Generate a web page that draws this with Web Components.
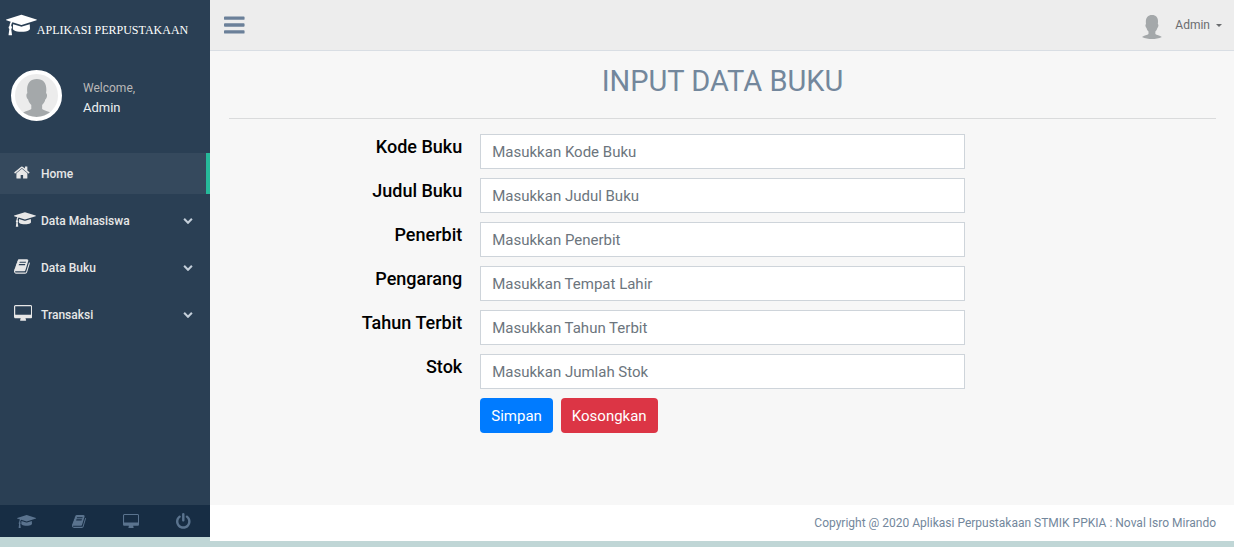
<!DOCTYPE html>
<html lang="id">
<head>
<meta charset="utf-8">
<meta name="viewport" content="width=device-width, initial-scale=1">
<title>Aplikasi Perpustakaan</title>
<style>
  body { margin: 0; background: #c0d6d6; font: 13px/20px Roboto, "Liberation Sans", sans-serif; color: #73879c; }
</style>
</head>
<body>
<library-app></library-app>
<script>
const ICONS = {
  cap: ['0 0 2304 1792', 'M1774 836l18 316q4 69-82 128t-235 93.5-323 34.5-323-34.5-235-93.5-82-128l18-316 574 181q22 7 48 7t48-7zm530-324q0 23-22 31l-1120 352q-4 1-10 1t-10-1l-652-206q-43 34-71 111.5t-34 178.5q63 36 63 109 0 69-58 107l58 433q2 14-8 25-9 11-24 11h-192q-15 0-24-11-10-11-8-25l58-433q-58-38-58-107 0-73 65-111 11-207 98-330l-333-104q-22-8-22-31t22-31l1120-352q4-1 10-1t10 1l1120 352q22 8 22 31z'],
  home: ['64 0 1664 1792', 'M1472 992v480q0 26-19 45t-45 19h-384v-384h-256v384h-384q-26 0-45-19t-19-45v-480q0-1 .5-3t.5-3l575-474 575 474q1 2 1 6zm223-69l-62 74q-8 9-21 11h-3q-13 0-21-7l-692-577-692 577q-12 8-24 7-13-2-21-11l-62-74q-8-10-7-23.5t11-21.5l719-599q32-26 76-26t76 26l244 204v-195q0-14 9-23t23-9h192q14 0 23 9t9 23v408l219 182q10 8 11 21.5t-7 23.5z'],
  book: ['64 0 1664 1792', 'M1703 478q40 57 18 129l-275 906q-19 64-76.5 107.5t-122.5 43.5h-923q-77 0-148.5-53.5t-99.5-131.5q-24-67-2-127 0-4 3-27t4-37q1-8-3-21.5t-3-19.5q2-11 8-21t16.5-23.5 16.5-23.5q23-38 45-91.5t30-91.5q3-10 .5-30t-.5-28q3-11 17-28t17-23q21-36 42-92t25-90q1-9-2.5-32t.5-28q4-13 22-30.5t22-22.5q19-26 42.5-84.5t27.5-96.5q1-8-3-25.5t-2-26.5q2-8 9-18t18-23 17-21q8-12 16.5-30.5t15-35 16-36 19.5-32 26.5-23.5 36-11.5 47.5 5.5l-1 3q38-9 51-9h761q74 0 114 56t18 130l-274 906q-36 119-71.5 153.5t-128.5 34.5h-869q-27 0-38 15-11 16-1 43 24 70 144 70h923q29 0 56-15.5t35-41.5l300-987q7-22 5-57 38 15 59 43zm-1064 2q-4 13 2 22.5t20 9.5h608q13 0 25.5-9.5t16.5-22.5l21-64q4-13-2-22.5t-20-9.5h-608q-13 0-25.5 9.5t-16.5 22.5zm-83 256q-4 13 2 22.5t20 9.5h608q13 0 25.5-9.5t16.5-22.5l21-64q4-13-2-22.5t-20-9.5h-608q-13 0-25.5 9.5t-16.5 22.5z'],
  desktop: ['0 0 1920 1792', 'M1792 992V160q0-13-9.500-22.500T1760 128H160q-13 0-22.500 9.500T128 160v832q0 13 9.500 22.500t22.500 9.500h1600q13 0 22.500-9.500t9.500-22.500zm128-832v1088q0 66-47 113t-113 47h-544q0 37 16 77.500t32 71 16 43.500q0 26-19 45t-45 19H704q-26 0-45-19t-19-45q0-14 16-44t32-70 16-78H160q-66 0-113-47T0 1248V160Q0 94 47 47T160 0h1600q66 0 113 47t47 113z'],
  power: ['128 0 1536 1792', 'M1664 896q0 156-61 298t-164 245-245 164-298 61-298-61-245-164-164-245-61-298q0-182 80.5-343t226.5-270q43-32 95.5-25t83.5 50q32 42 24.5 94.5t-49.5 84.5q-98 74-151.5 181t-53.5 228q0 104 40.5 198.5t109.5 163.5 163.5 109.5 198.5 40.5 198.5-40.5 163.5-109.5 109.5-163.5 40.5-198.5q0-121-53.5-228t-151.5-181q-42-32-49.5-84.5t24.5-94.5q31-43 84-50t95 25q146 109 226.5 270t80.5 343zm-640-768v640q0 52-38 90t-90 38-90-38-38-90v-640q0-52 38-90t90-38 90 38 38 90z'],
  chevron: ['0 128 1792 1792', 'M1683 808l-742 741q-19 19-45 19t-45-19l-742-741q-19-19-19-45.5t19-45.5l166-165q19-19 45-19t45 19l531 531 531-531q19-19 45-19t45 19l166 165q19 19 19 45.5t-19 45.5z'],
  bars: ['0 0 1536 1792', 'M64 256h1408q64 0 64 64v128q0 64-64 64H64q-64 0-64-64V320q0-64 64-64zM64 768h1408q64 0 64 64v128q0 64-64 64H64q-64 0-64-64V832q0-64 64-64zM64 1280h1408q64 0 64 64v128q0 64-64 64H64q-64 0-64-64v-128q0-64 64-64z'],
  caret: ['0 0 8 4', 'M0 0h8L4 4z'],
  person: ['0 0 40 48', 'M20 0c8 0 12 5 12 13 0 3-.3 4-.3 5 2 1 1.300 6-1 8-.7 3-2 5-4 7v5c2 2 9 3 13 6-6 3-13 4-19.700 4S6 47 0 44c4-3 11-4 13-6v-5c-2-2-3.300-4-4-7-2.300-2-3-7-1-8 0-1-.3-2-.3-5C8 5 12 0 20 0z']
};

function define(name, html, setup) {
  const template = document.createElement('template');
  template.innerHTML = html;
  customElements.define(name, class extends HTMLElement {
    constructor() {
      super();
      this.attachShadow({ mode: 'open' }).append(template.content.cloneNode(true));
    }
    connectedCallback() { if (setup) setup(this, this.shadowRoot); }
  });
}

define('ui-icon', `
  <style>
    :host { display: inline-flex; flex: none; }
    svg { display: block; height: var(--icon-size, 17px); fill: currentColor; }
  </style>
  <svg aria-hidden="true"><path/></svg>`,
  (el, root) => {
    const [box, d] = ICONS[el.getAttribute('name')];
    root.querySelector('svg').setAttribute('viewBox', box);
    root.querySelector('path').setAttribute('d', d);
  });

define('user-profile', `
  <style>
    :host { display: flex; align-items: center; gap: 21px; padding: 0 11px; }
    .photo { box-sizing: border-box; display: flex; justify-content: center; align-items: flex-end; width: 51px; height: 51px; border: 4px solid #fff; border-radius: 50%; background: #ececec; color: #a4a8aa; overflow: hidden; --icon-size: 38px; }
    .text { padding-top: 5px; }
    span { font-size: 12px; color: #bab8b8; }
    h2 { margin: 0; font-size: 13px; font-weight: 400; color: #ecf0f1; }
  </style>
  <div class="photo"><ui-icon name="person"></ui-icon></div>
  <div class="text"><span>Welcome,</span><h2><slot></slot></h2></div>`);

define('side-bar', `
  <style>
    :host { display: flex; flex-direction: column; background: #2a3f54; }
    .brand { display: flex; align-items: center; height: 50px; padding-left: 6px; color: #fff; font: 12px/20px "Liberation Serif", serif; text-decoration: none; --icon-size: 24px; }
    .brand span { padding-top: 10px; }
    user-profile { margin-top: 20px; }
    nav { display: flex; flex-direction: column; gap: 6px; margin-top: 32px; flex: 1; }
    footer { display: grid; grid-template-columns: repeat(4, 1fr); height: 32px; background: #172d44; --icon-size: 15px; }
    footer a { display: flex; align-items: center; justify-content: center; color: #5a738e; }
    footer ui-icon[name="power"] { --icon-size: 17px; }
  </style>
  <a class="brand" href="#"><ui-icon name="cap"></ui-icon><span>APLIKASI PERPUSTAKAAN</span></a>
  <user-profile>Admin</user-profile>
  <nav>
    <nav-entry icon="home" active>Home</nav-entry>
    <nav-entry icon="cap">Data Mahasiswa</nav-entry>
    <nav-entry icon="book">Data Buku</nav-entry>
    <nav-entry icon="desktop">Transaksi</nav-entry>
  </nav>
  <footer>
    <a href="#" aria-label="Mahasiswa"><ui-icon name="cap"></ui-icon></a>
    <a href="#" aria-label="Buku"><ui-icon name="book"></ui-icon></a>
    <a href="#" aria-label="Transaksi"><ui-icon name="desktop"></ui-icon></a>
    <a href="#" aria-label="Keluar"><ui-icon name="power"></ui-icon></a>
  </footer>`);

define('nav-entry', `
  <style>
    :host { display: block; }
    a { display: flex; align-items: center; height: 41px; padding: 0 17px 0 14px; box-sizing: border-box; color: #e7e7e7; text-decoration: none; font-weight: 500; font-size: 12px; }
    .icon { width: 27px; display: flex; padding-bottom: 3px; box-sizing: border-box; }
    .label { flex: 1; }
    .chevron { --icon-size: 10px; color: #c4cfda; }
    :host([active]) a { background: #35495d; border-right: 4px solid #26b99a; }
    :host([active]) .chevron { display: none; }
  </style>
  <a href="#"><span class="icon"></span><span class="label"><slot></slot></span><ui-icon class="chevron" name="chevron"></ui-icon></a>`,
  (el, root) => {
    const icon = document.createElement('ui-icon');
    icon.setAttribute('name', el.getAttribute('icon'));
    root.querySelector('.icon').replaceChildren(icon);
  });

define('top-bar', `
  <style>
    :host { display: flex; align-items: center; justify-content: space-between; height: 50px; padding: 0 12px 0 14px; background: #ededed; border-bottom: 1px solid #d9dee4; }
    button { display: flex; align-items: center; padding: 0; border: 0; background: none; color: #6b8099; font: inherit; cursor: pointer; }
    .toggle { --icon-size: 24px; }
    .user { gap: 13px; font-size: 12px; color: #6a6c6f; }
    .user .photo { --icon-size: 24px; color: #a4a8aa; padding-top: 3px; }
    .name { display: flex; align-items: center; gap: 6px; --icon-size: 3px; }
  </style>
  <button class="toggle" type="button" aria-label="Menu"><ui-icon name="bars"></ui-icon></button>
  <button class="user" type="button"><ui-icon class="photo" name="person"></ui-icon><span class="name"><slot></slot><ui-icon name="caret"></ui-icon></span></button>`);

define('form-row', `
  <style>
    :host { display: grid; grid-template-columns: repeat(12, 1fr); column-gap: 18px; }
    label { grid-column: span 3; text-align: right; font-size: 18px; line-height: 26px; font-weight: 500; color: #000; }
    input { grid-column: span 6; box-sizing: border-box; width: 100%; height: 35px; padding: 0 11px; border: 1px solid #ced4da; border-radius: 0; background: #fff; font: inherit; font-size: 15px; color: #495057; }
    input::placeholder { color: #6c757d; opacity: 1; }
  </style>
  <label for="field"><slot></slot></label><input id="field" type="text">`,
  (el, root) => { root.querySelector('input').placeholder = el.getAttribute('placeholder'); });

define('action-button', `
  <style>
    :host { display: block; }
    button { height: 35px; padding: 0 11px; border: 0; border-radius: 4px; background: var(--button-color, #007bff); color: #fff; font: inherit; font-size: 15px; cursor: pointer; }
  </style>
  <button type="button"><slot></slot></button>`);

define('book-form', `
  <style>
    :host { display: block; padding: 12px 18px 0 19px; }
    h1 { margin: 0; padding-bottom: 19px; border-bottom: 1px solid #dadbdc; font-size: 29px; line-height: 36px; font-weight: 400; text-align: center; }
    form { display: flex; flex-direction: column; gap: 9px; padding-top: 15px; }
    .actions { display: grid; grid-template-columns: repeat(12, 1fr); column-gap: 18px; }
    .actions div { grid-column: 4 / span 6; display: flex; gap: 8px; }
    .reset { --button-color: #dc3545; }
  </style>
  <h1>INPUT DATA BUKU</h1>
  <form>
    <form-row placeholder="Masukkan Kode Buku">Kode Buku</form-row>
    <form-row placeholder="Masukkan Judul Buku">Judul Buku</form-row>
    <form-row placeholder="Masukkan Penerbit">Penerbit</form-row>
    <form-row placeholder="Masukkan Tempat Lahir">Pengarang</form-row>
    <form-row placeholder="Masukkan Tahun Terbit">Tahun Terbit</form-row>
    <form-row placeholder="Masukkan Jumlah Stok">Stok</form-row>
    <div class="actions"><div><action-button>Simpan</action-button><action-button class="reset">Kosongkan</action-button></div></div>
  </form>`);

define('library-app', `
  <style>
    :host { display: grid; grid-template-columns: 210px 1fr; min-height: 100vh; }
    side-bar { margin-bottom: 10px; }
    .page { display: flex; flex-direction: column; margin-bottom: 6px; background: #f7f7f7; }
    main { flex: 1; }
    footer { padding: 8px 18px; background: #fff; font-size: 12px; text-align: right; }
  </style>
  <side-bar></side-bar>
  <div class="page">
    <top-bar>Admin</top-bar>
    <main><book-form></book-form></main>
    <footer>Copyright @ 2020 Aplikasi Perpustakaan STMIK PPKIA : Noval Isro Mirando</footer>
  </div>`);
</script>
</body>
</html>
